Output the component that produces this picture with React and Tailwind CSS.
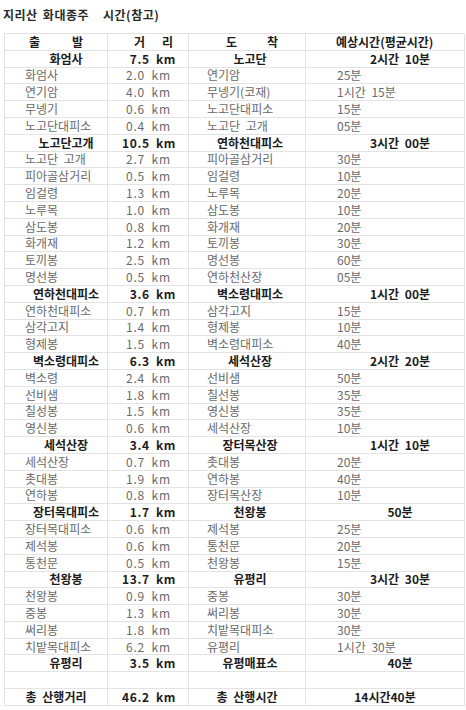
const rows = [
  { b: true, c: ["화엄사", "7.5 km", "노고단", "2시간 10분"] },
  { c: ["화엄사", "2.0 km", "연기암", "25분"] },
  { c: ["연기암", "4.0 km", "무넹기(코재)", "1시간 15분"] },
  { c: ["무넹기", "0.6 km", "노고단대피소", "15분"] },
  { c: ["노고단대피소", "0.4 km", "노고단 고개", "05분"] },
  { b: true, c: ["노고단고개", "10.5 km", "연하천대피소", "3시간 00분"] },
  { c: ["노고단 고개", "2.7 km", "피아골삼거리", "30분"] },
  { c: ["피아골삼거리", "0.5 km", "임걸령", "10분"] },
  { c: ["임걸령", "1.3 km", "노루목", "20분"] },
  { c: ["노루목", "1.0 km", "삼도봉", "10분"] },
  { c: ["삼도봉", "0.8 km", "화개재", "20분"] },
  { c: ["화개재", "1.2 km", "토끼봉", "30분"] },
  { c: ["토끼봉", "2.5 km", "명선봉", "60분"] },
  { c: ["명선봉", "0.5 km", "연하천산장", "05분"] },
  { b: true, c: ["연하천대피소", "3.6 km", "벽소령대피소", "1시간 00분"] },
  { c: ["연하천대피소", "0.7 km", "삼각고지", "15분"] },
  { c: ["삼각고지", "1.4 km", "형제봉", "10분"] },
  { c: ["형제봉", "1.5 km", "벽소령대피소", "40분"] },
  { b: true, c: ["벽소령대피소", "6.3 km", "세석산장", "2시간 20분"] },
  { c: ["벽소령", "2.4 km", "선비샘", "50분"] },
  { c: ["선비샘", "1.8 km", "칠선봉", "35분"] },
  { c: ["칠성봉", "1.5 km", "영신봉", "35분"] },
  { c: ["영신봉", "0.6 km", "세석산장", "10분"] },
  { b: true, c: ["세석산장", "3.4 km", "장터목산장", "1시간 10분"] },
  { c: ["세석산장", "0.7 km", "촛대봉", "20분"] },
  { c: ["촛대봉", "1.9 km", "연하봉", "40분"] },
  { c: ["연하봉", "0.8 km", "장터목산장", "10분"] },
  { b: true, c: ["장터목대피소", "1.7 km", "천왕봉", "50분"] },
  { c: ["장터목대피소", "0.6 km", "제석봉", "25분"] },
  { c: ["제석봉", "0.6 km", "통천문", "20분"] },
  { c: ["통천문", "0.5 km", "천왕봉", "15분"] },
  { b: true, c: ["천왕봉", "13.7 km", "유평리", "3시간 30분"] },
  { c: ["천왕봉", "0.9 km", "중봉", "30분"] },
  { c: ["중봉", "1.3 km", "써리봉", "30분"] },
  { c: ["써리봉", "1.8 km", "치밭목대피소", "30분"] },
  { c: ["치밭목대피소", "6.2 km", "유평리", "1시간 30분"] },
  { b: true, c: ["유평리", "3.5 km", "유평매표소", "40분"] },
];

const cell = "flex items-center border-r border-b border-[#e3e3e3] whitespace-nowrap overflow-hidden [word-spacing:3px]";

// 일반 행: 왼쪽 정렬 / 굵은 행: 구간 합계
const plain = ["pl-[20px]", "pl-[18px] tracking-[0.8px]", "pl-[18px]", "pl-[31px]"];
const bold = ["justify-center pl-[20px]", "justify-end pr-[12px] tracking-[0.6px]", "justify-center pl-[6px]", "justify-center pl-[30px]"];

export default function App() {
  return (
    <div className="w-[466px] h-[710px] bg-white overflow-hidden font-['Noto_Sans_CJK_KR',sans-serif]">
      <div className="h-[33px] pl-[3px] pt-[7px] text-[12px] leading-[16px] font-semibold tracking-[0.5px] text-[#2a2a2a] [word-spacing:2px]">
        지리산 화대종주<span className="ml-[14px]">시간(참고)</span>
      </div>

      <div className="ml-[4px] w-[460px] grid grid-cols-[103px_81px_117px_159px] auto-rows-[16.8px] border-l border-t border-[#e3e3e3] text-[12px] leading-none">
        {/* header */}
        <div className={`${cell} justify-between px-[24px] font-bold text-[#1c1c1c]`}>
          <span>출</span>
          <span>발</span>
        </div>
        <div className={`${cell} justify-between pl-[26px] pr-[15px] font-bold text-[#1c1c1c]`}>
          <span>거</span>
          <span>리</span>
        </div>
        <div className={`${cell} justify-between pl-[37px] pr-[27px] font-bold text-[#1c1c1c]`}>
          <span>도</span>
          <span>착</span>
        </div>
        <div className={`${cell} pl-[30px] font-semibold text-[#1c1c1c]`}>예상시간(평균시간)</div>

        {rows.map((r, i) =>
          r.c.map((t, j) => (
            <div
              key={`${i}-${j}`}
              className={`${cell} ${r.b ? bold[j] + " font-bold text-[#1c1c1c]" : plain[j] + " text-[#6a6a6a]"}`}
            >
              {t}
            </div>
          ))
        )}

        {/* 빈 행 */}
        <div className={cell}></div>
        <div className={cell}></div>
        <div className={cell}></div>
        <div className={cell}></div>

        {/* 합계 */}
        <div className={`${cell} justify-center font-bold text-[#1c1c1c]`}>총 산행거리</div>
        <div className={`${cell} justify-end pr-[12px] tracking-[0.6px] font-bold text-[#1c1c1c]`}>46.2 km</div>
        <div className={`${cell} justify-center font-bold text-[#1c1c1c]`}>총 산행시간</div>
        <div className={`${cell} justify-center font-bold text-[#1c1c1c]`}>14시간40분</div>
      </div>
    </div>
  );
}
